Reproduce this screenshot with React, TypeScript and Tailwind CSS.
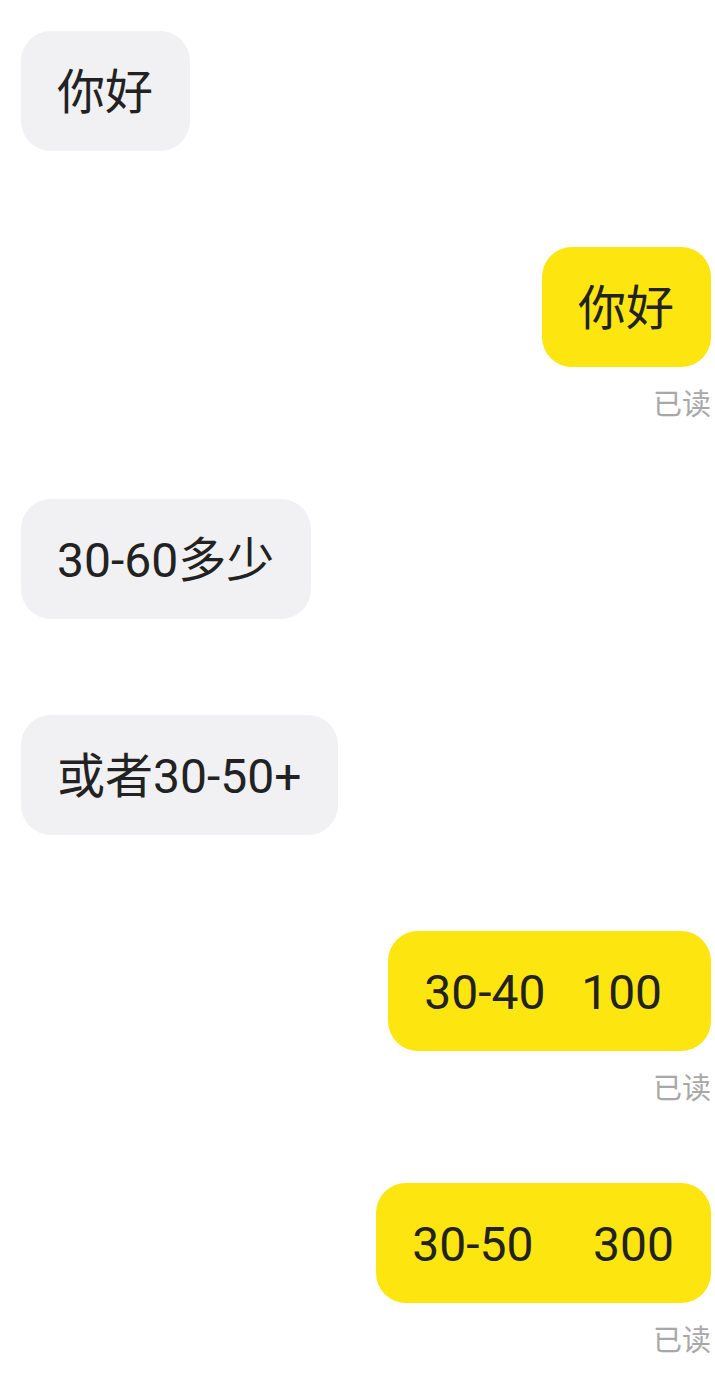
import React from 'react'

type Message = {
  id: number
  text: string
  mine: boolean
  read?: boolean
}

const messages: Message[] = [
  { id: 1, text: '你好', mine: false },
  { id: 2, text: '你好', mine: true, read: true },
  { id: 3, text: '30-60多少', mine: false },
  { id: 4, text: '或者30-50+', mine: false },
  { id: 5, text: '30-40   100 ', mine: true, read: true },
  { id: 6, text: '30-50     300', mine: true, read: true },
]

const App = () => {
  return (
    <div
      className="min-h-screen bg-white pl-[21px] pr-[4px] pt-[31px] pb-8 flex flex-col gap-[96px]"
      style={{ fontFamily: "Roboto, 'Noto Sans CJK SC', 'Noto Sans', sans-serif" }}
    >
      {messages.map((msg) => (
        <div key={msg.id} className={`flex flex-col ${msg.mine ? 'items-end' : 'items-start'}`}>
          <div
            className={`rounded-[30px] pl-9 pr-[37px] pt-[26px] pb-[22px] text-[48px] leading-[72px] whitespace-pre text-[#222222] ${
              msg.mine ? 'bg-[#fde510]' : 'bg-[#f1f1f3]'
            }`}
          >
            {msg.text}
          </div>
          {msg.read && (
            <div className="pt-6 h-9 text-[29px] leading-7 text-[#a8a8a8]">已读</div>
          )}
        </div>
      ))}
    </div>
  )
}

export default App
